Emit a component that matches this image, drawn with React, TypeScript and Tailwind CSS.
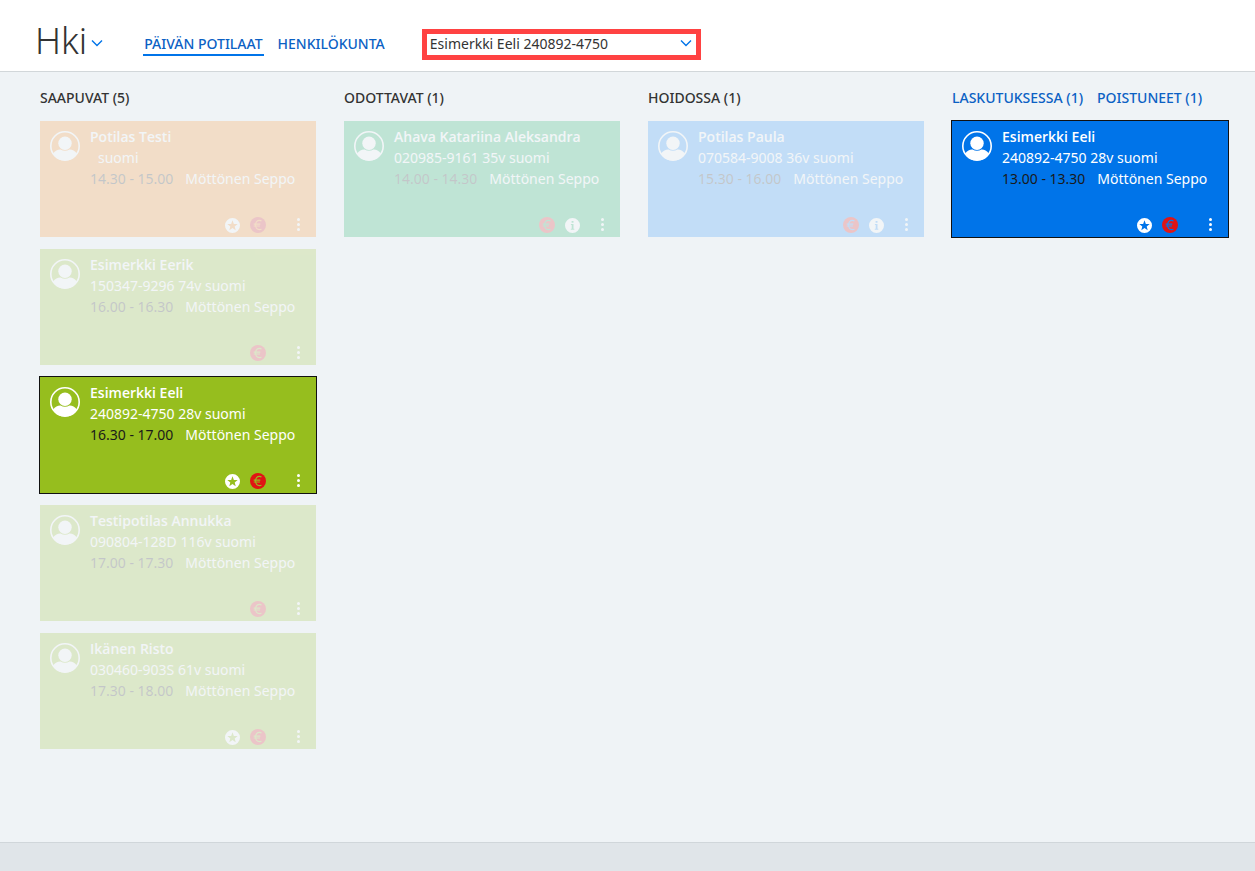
import { useState } from "react";
import clsx from "clsx";

// ---------------------------------------------------------------------------
// Types
// ---------------------------------------------------------------------------

type Tone = "orange" | "lime" | "green" | "sky" | "blue";

interface Visit {
  id: string;
  name: string;
  ssn?: string;
  age?: string;
  language: string;
  time: string;
  doctor: string;
  tone: Tone;
  star?: boolean;
  info?: boolean;
}

interface Column {
  titles: string[];
  link?: boolean;
  visits: Visit[];
}

// ---------------------------------------------------------------------------
// Data
// ---------------------------------------------------------------------------

const TONES: Record<Tone, string> = {
  orange: "bg-[#ff8a14]",
  lime: "bg-[#96be1e]",
  green: "bg-[#05ae58]",
  sky: "bg-[#138aff]",
  blue: "bg-[#0074e9]",
};

const EURO_STROKES: Record<Tone, string> = {
  orange: "stroke-[#ff8a14]",
  lime: "stroke-[#96be1e]",
  green: "stroke-[#05ae58]",
  sky: "stroke-[#138aff]",
  blue: "stroke-[#0074e9]",
};

const DOCTOR = "Möttönen Seppo";

const COLUMNS: Column[] = [
  {
    titles: ["SAAPUVAT (5)"],
    visits: [
      { id: "v1", name: "Potilas Testi", language: "suomi", time: "14.30 - 15.00", doctor: DOCTOR, tone: "orange", star: true },
      { id: "v2", name: "Esimerkki Eerik", ssn: "150347-9296", age: "74v", language: "suomi", time: "16.00 - 16.30", doctor: DOCTOR, tone: "lime" },
      { id: "v3", name: "Esimerkki Eeli", ssn: "240892-4750", age: "28v", language: "suomi", time: "16.30 - 17.00", doctor: DOCTOR, tone: "lime", star: true },
      { id: "v4", name: "Testipotilas Annukka", ssn: "090804-128D", age: "116v", language: "suomi", time: "17.00 - 17.30", doctor: DOCTOR, tone: "lime" },
      { id: "v5", name: "Ikänen Risto", ssn: "030460-903S", age: "61v", language: "suomi", time: "17.30 - 18.00", doctor: DOCTOR, tone: "lime", star: true },
    ],
  },
  {
    titles: ["ODOTTAVAT (1)"],
    visits: [
      { id: "v6", name: "Ahava Katariina Aleksandra", ssn: "020985-9161", age: "35v", language: "suomi", time: "14.00 - 14.30", doctor: DOCTOR, tone: "green", info: true },
    ],
  },
  {
    titles: ["HOIDOSSA (1)"],
    visits: [
      { id: "v7", name: "Potilas Paula", ssn: "070584-9008", age: "36v", language: "suomi", time: "15.30 - 16.00", doctor: DOCTOR, tone: "sky", info: true },
    ],
  },
  {
    titles: ["LASKUTUKSESSA (1)", "POISTUNEET (1)"],
    link: true,
    visits: [
      { id: "v8", name: "Esimerkki Eeli", ssn: "240892-4750", age: "28v", language: "suomi", time: "13.00 - 13.30", doctor: DOCTOR, tone: "blue", star: true },
    ],
  },
];

const PATIENTS = [
  ...new Set(
    COLUMNS.flatMap((c) => c.visits)
      .filter((v) => v.ssn)
      .map((v) => `${v.name} ${v.ssn}`),
  ),
];

// ---------------------------------------------------------------------------
// Icons
// ---------------------------------------------------------------------------

function Chevron({ className }: { className?: string }) {
  return (
    <svg viewBox="0 0 12 8" className={clsx("h-2 w-3", className)} fill="none" stroke="#0074e9" strokeWidth="1.4">
      <path d="M1 1.5 6 6.5l5-5" />
    </svg>
  );
}

function Avatar() {
  return (
    <svg viewBox="0 0 30 30" className="size-[30px] shrink-0">
      <circle cx="15" cy="15" r="14.2" fill="none" stroke="#fff" strokeWidth="1.6" />
      <circle cx="15" cy="12.3" r="6.7" fill="#fff" />
      <path d="M3.2 22.4C5 19.6 8.2 18.3 10.6 18.5c2.6 1.7 6.2 1.7 8.8 0 2.4-.2 5.6 1.1 7.4 3.9A14 14 0 0 1 15 29.6 14 14 0 0 1 3.2 22.4z" fill="#fff" />
    </svg>
  );
}

function StarBadge() {
  return (
    <svg viewBox="0 0 15 15" className="size-[15px]" fill="#fff">
      <path
        fillRule="evenodd"
        d="M7.5 0a7.5 7.5 0 1 0 0 15 7.5 7.5 0 0 0 0-15zm0 2.3 1.35 3.6 3.85.15-3 2.4 1 3.75-3.2-2.15-3.2 2.15 1-3.75-3-2.4 3.85-.15z"
      />
    </svg>
  );
}

function InfoBadge() {
  return (
    <svg viewBox="0 0 15 15" className="size-[15px]" fill="#fff">
      <path
        fillRule="evenodd"
        d="M7.5 0a7.5 7.5 0 1 0 0 15 7.5 7.5 0 0 0 0-15zM6.6 3h1.9v1.7H6.6zM5.9 6h2.6v4.7h.8v1H5.8v-1h.9V7h-.8z"
      />
    </svg>
  );
}

// The euro sign takes the colour of the card behind it
function EuroBadge({ tone }: { tone: Tone }) {
  return (
    <svg viewBox="0 0 16 16" className="size-4">
      <circle cx="8" cy="8" r="8" fill="#e01414" />
      <path
        d="M11.5 3.9A4.4 4.4 0 0 0 9.5 3.4C7 3.4 5.6 5.3 5.6 8s1.4 4.6 3.9 4.6c.8 0 1.5-.2 2-.5M3.7 7.1h6.6M3.7 9h6.2"
        fill="none"
        className={EURO_STROKES[tone]}
        strokeWidth="1.1"
      />
    </svg>
  );
}

// ---------------------------------------------------------------------------
// Visit card
// ---------------------------------------------------------------------------

function VisitCard({ visit, active }: { visit: Visit; active: boolean }) {
  return (
    <article
      className={clsx(
        "flex h-[116px] flex-col justify-between pl-2.5 text-white",
        TONES[visit.tone],
        active ? "outline outline-[#111]" : "opacity-20",
      )}
    >
      <div className="flex gap-2.5">
        <div className="pt-2.5">
          <Avatar />
        </div>
        <div className="min-w-0 pt-[5px] text-sm leading-[21px] whitespace-nowrap">
          <h3 className="font-['Open_Sans','Noto_Sans',sans-serif] font-semibold">{visit.name}</h3>
          <p className={clsx(!visit.ssn && "pl-2")}>
            {[visit.ssn, visit.age, visit.language].filter(Boolean).join(" ")}
          </p>
          <p className="flex gap-3">
            <time className="text-[#1a1a1a]">{visit.time}</time>
            <span>{visit.doctor}</span>
          </p>
        </div>
      </div>
      <div className="flex items-center justify-end gap-2.5 pr-2.5 pb-1">
        {visit.star && <StarBadge />}
        <EuroBadge tone={visit.tone} />
        <span>{visit.info && <InfoBadge />}</span>
        <button type="button" aria-label="Valikko" className="ml-1 flex w-4 flex-col items-center gap-0.5 pb-0.5">
          <span className="size-[3px] rounded-full bg-white" />
          <span className="size-[3px] rounded-full bg-white" />
          <span className="size-[3px] rounded-full bg-white" />
        </button>
      </div>
    </article>
  );
}

// ---------------------------------------------------------------------------
// Page
// ---------------------------------------------------------------------------

export default function App() {
  const [patient, setPatient] = useState("Esimerkki Eeli 240892-4750");

  return (
    <div className="flex min-h-screen flex-col bg-[#eff3f6] font-['Noto_Sans',sans-serif] text-[#333]">
      <header className="flex h-[72px] items-center border-b border-[#d2d7da] bg-white pt-[18px] pl-[35px]">
        <button type="button" className="flex items-center gap-1 pb-2 text-4xl font-light">
          Hki
          <Chevron className="mt-1" />
        </button>
        <nav className="ml-10 flex gap-3.5 text-sm font-medium text-[#0b61c4]">
          <a href="#potilaat" className="border-b-2 border-[#0074e9] px-px">
            PÄIVÄN POTILAAT
          </a>
          <a href="#henkilokunta" className="border-b-2 border-transparent">
            HENKILÖKUNTA
          </a>
        </nav>
        <div className="relative ml-[37px] w-[279px]">
          <select
            aria-label="Potilas"
            value={patient}
            onChange={(e) => setPatient(e.target.value)}
            className="block h-[31px] w-full appearance-none border-5 border-[#ff4242] bg-white pb-px pl-[3px] text-sm leading-5 outline-none"
          >
            {PATIENTS.map((p) => (
              <option key={p}>{p}</option>
            ))}
          </select>
          <Chevron className="pointer-events-none absolute top-2.5 right-[9px]" />
        </div>
      </header>

      <main className="grid flex-1 grid-cols-4 content-start gap-7 pt-[15px] pr-[27px] pb-6 pl-10">
        {COLUMNS.map((column) => (
          <section key={column.titles[0]} className="min-w-0">
            <div className="mb-[13px] flex gap-3.5 text-sm leading-[21px] font-medium whitespace-nowrap">
              {column.titles.map((title) =>
                column.link ? (
                  <a key={title} href="#laskutus" className="text-[#0b61c4]">
                    {title}
                  </a>
                ) : (
                  <h2 key={title}>{title}</h2>
                ),
              )}
            </div>
            <div className="flex flex-col gap-3">
              {column.visits.map((visit) => (
                <VisitCard key={visit.id} visit={visit} active={`${visit.name} ${visit.ssn}` === patient} />
              ))}
            </div>
          </section>
        ))}
      </main>

      <footer className="h-[29px] border-t border-[#d0d6da] bg-[#e0e5e9]" />
    </div>
  );
}
